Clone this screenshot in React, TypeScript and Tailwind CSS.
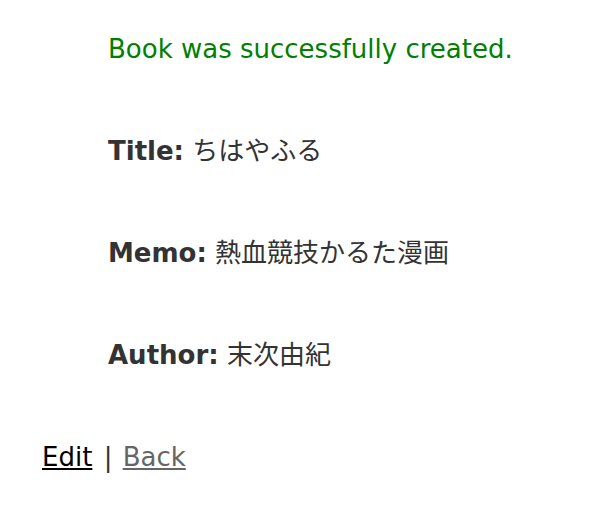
export default function App() {
  const font = {fontFamily: '"DejaVu Sans", Verdana, "Noto Sans CJK JP", sans-serif'};
  return (
    <div
      className="min-h-[524px] bg-white text-[#333] text-[26px] leading-[36px]"
      style={font}
    >
      <div className="pt-[31px] pl-[42px]">
        <div className="pl-[66px] flex flex-col gap-[66px]">
          <p className="text-[#008000]">Book was successfully created.</p>
          <p>
            <strong className="font-bold">Title:</strong> ちはやふる
          </p>
          <p>
            <strong className="font-bold">Memo:</strong> 熱血競技かるた漫画
          </p>
          <p>
            <strong className="font-bold">Author:</strong> 末次由紀
          </p>
        </div>
        <div className="mt-[66px]">
          <a href="#" className="text-black underline">Edit</a>
          {' '}
          <span className="ml-[3px] mr-[2px]">|</span>
          {' '}
          <a href="#" className="text-[#666] underline">Back</a>
        </div>
      </div>
    </div>
  );
}
